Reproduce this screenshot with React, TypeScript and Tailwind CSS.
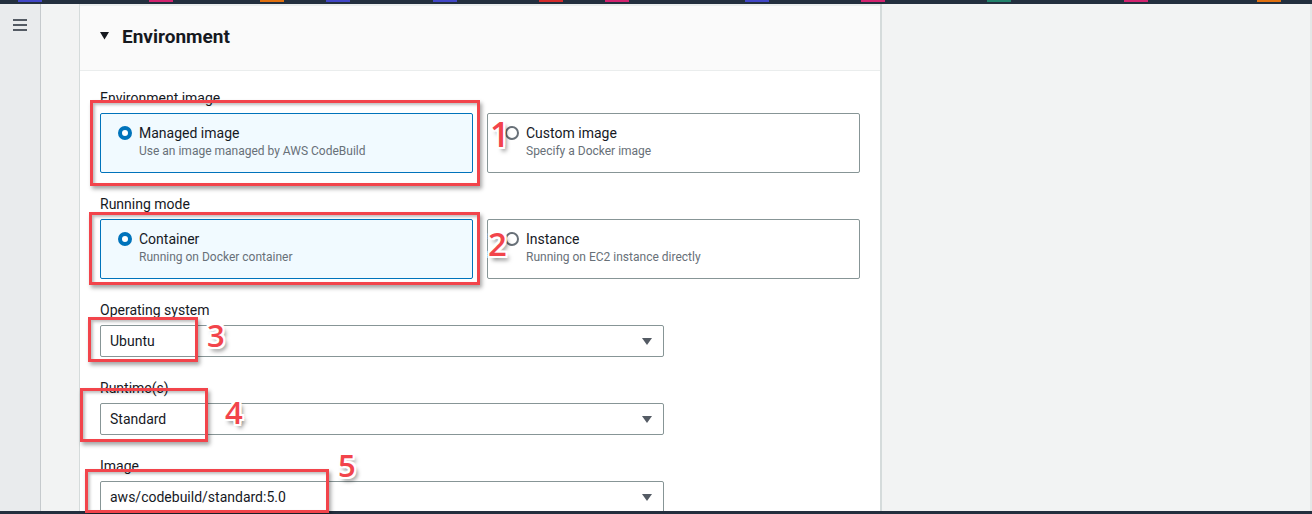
import React from "react";

const segs: [number, string][] = [
  [18, "#4147c7"],
  [149, "#d3236f"],
  [260, "#e0700f"],
  [326, "#4147c7"],
  [433, "#4147c7"],
  [539, "#d42b2b"],
  [605, "#d3236f"],
  [745, "#4147c7"],
  [861, "#d3236f"],
  [987, "#22826b"],
  [1124, "#d3236f"],
  [1257, "#e0700f"],
];

function TopBar() {
  return (
    <svg width="1312" height="4" className="block shrink-0">
      <rect x="0" y="0" width="1312" height="4" fill="#232f3e" />
      {segs.map(([x, c]) => (
        <rect key={x} x={x} y="0" width="24" height="2" fill={c} />
      ))}
    </svg>
  );
}

function Caret() {
  return (
    <svg width="10" height="7" viewBox="0 0 10 7" className="block">
      <polygon points="0,0 10,0 5,7" fill="#545b64" />
    </svg>
  );
}

function Radio({ selected }: { selected: boolean }) {
  return selected ? (
    <div className="w-[14px] h-[14px] rounded-full border-[4px] border-[#0073bb] bg-white" />
  ) : (
    <div className="w-[14px] h-[14px] rounded-full border-2 border-[#687078] bg-white" />
  );
}

function RadioCard({ selected, title, desc }: { selected: boolean; title: string; desc: string }) {
  return (
    <div
      className={
        selected
          ? "h-[60px] rounded-[2px] border border-[#0073bb] bg-[#f1faff] pl-[17px] pt-[10px] flex gap-[7px]"
          : "h-[60px] rounded-[2px] border border-[#879596] bg-white pl-[17px] pt-[10px] flex gap-[7px]"
      }
    >
      <div className="pt-[2px]">
        <Radio selected={selected} />
      </div>
      <div>
        <div className="text-[14px] leading-[19px] text-[#16191f]">{title}</div>
        <div className="text-[12px] leading-[17px] text-[#687078]">{desc}</div>
      </div>
    </div>
  );
}

function Select({ value }: { value: string }) {
  return (
    <div className="w-[564px] h-[32px] border border-[#879596] rounded-[2px] bg-white flex items-center justify-between pl-[9px] pr-[11px] text-[14px] text-[#16191f]">
      <span>{value}</span>
      <Caret />
    </div>
  );
}

function Field({ label, children }: { label: string; children: React.ReactNode }) {
  return (
    <div className="flex flex-col">
      <div className="text-[14px] leading-[20px] text-[#16191f] mb-[5px]">{label}</div>
      {children}
    </div>
  );
}

function Box({ className }: { className: string }) {
  return (
    <div
      className={
        "absolute border-[3px] border-[#f2444b] shadow-[2px_3px_4px_rgba(0,0,0,0.35),inset_2px_2px_3px_rgba(0,0,0,0.25)] " +
        className
      }
    />
  );
}

function Num({ n, className }: { n: string; className: string }) {
  return (
    <div
      className={
        "absolute font-['Open_Sans',sans-serif] font-semibold leading-none text-[#f2444b] [text-shadow:-2px_-2px_0_#fff,2px_-2px_0_#fff,-2px_2px_0_#fff,2px_2px_0_#fff,0_-2px_0_#fff,0_2px_0_#fff,-2px_0_0_#fff,2px_0_0_#fff,3px_4px_4px_rgba(0,0,0,0.5)] " +
        className
      }
    >
      {n}
    </div>
  );
}

export default function App() {
  return (
    <div className="w-[1312px] h-[514px] overflow-hidden relative flex flex-col bg-[#f2f3f3] font-['Roboto',sans-serif]">
      <TopBar />
      <div className="flex flex-1 min-h-0">
        <aside className="w-[41px] shrink-0 bg-[#e9ebed] border-r border-[#c6cacd] pt-[15px] flex flex-col items-center">
          <div className="flex flex-col gap-[3px] w-[14px]">
            <div className="h-[2px] bg-[#545b64]" />
            <div className="h-[2px] bg-[#545b64]" />
            <div className="h-[2px] bg-[#545b64]" />
          </div>
        </aside>
        <div className="w-[39px] shrink-0 bg-[#f2f3f3] border-r border-[#d5dbdb]" />
        <main className="w-[802px] shrink-0 bg-white border-r-2 border-[#d5dbdb] flex flex-col">
          <div className="h-[67px] shrink-0 bg-[#fafafa] border-t-2 border-b border-[#eaeded] flex items-center pl-[20px] pb-[4px] gap-[13px]">
            <svg width="9" height="8" viewBox="0 0 9 8" className="block">
              <polygon points="0,0 9,0 4.5,7.5" fill="#16191f" />
            </svg>
            <span className="text-[19px] font-bold text-[#16191f] leading-none">Environment</span>
          </div>
          <div className="pl-[20px] pt-[17px] flex flex-col gap-[21px]">
            <Field label="Environment image">
              <div className="grid grid-cols-2 gap-[14px] w-[760px]">
                <RadioCard selected title="Managed image" desc="Use an image managed by AWS CodeBuild" />
                <RadioCard selected={false} title="Custom image" desc="Specify a Docker image" />
              </div>
            </Field>
            <Field label="Running mode">
              <div className="grid grid-cols-2 gap-[14px] w-[760px]">
                <RadioCard selected title="Container" desc="Running on Docker container" />
                <RadioCard selected={false} title="Instance" desc="Running on EC2 instance directly" />
              </div>
            </Field>
            <Field label="Operating system">
              <Select value="Ubuntu" />
            </Field>
            <Field label="Runtime(s)">
              <Select value="Standard" />
            </Field>
            <Field label="Image">
              <Select value="aws/codebuild/standard:5.0" />
            </Field>
          </div>
        </main>
        <div className="flex-1 bg-[#f2f3f3] border-r-2 border-[#e4e7e7]" />
      </div>
      <div className="h-[3px] shrink-0 bg-[#232f3e]" />

      <Box className="left-[90px] top-[100px] w-[390px] h-[86px]" />
      <Box className="left-[89px] top-[212px] w-[391px] h-[73px]" />
      <Box className="left-[88px] top-[317px] w-[110px] h-[45px]" />
      <Box className="left-[80px] top-[388px] w-[128px] h-[54px]" />
      <Box className="left-[85px] top-[469px] w-[244px] h-[44px]" />

      <Num n="1" className="left-[490px] top-[117px] text-[34px]" />
      <Num n="2" className="left-[488px] top-[227px] text-[33px]" />
      <Num n="3" className="left-[207px] top-[320px] text-[31px]" />
      <Num n="4" className="left-[225px] top-[397px] text-[31px]" />
      <Num n="5" className="left-[338px] top-[450px] text-[31px]" />
    </div>
  );
}
